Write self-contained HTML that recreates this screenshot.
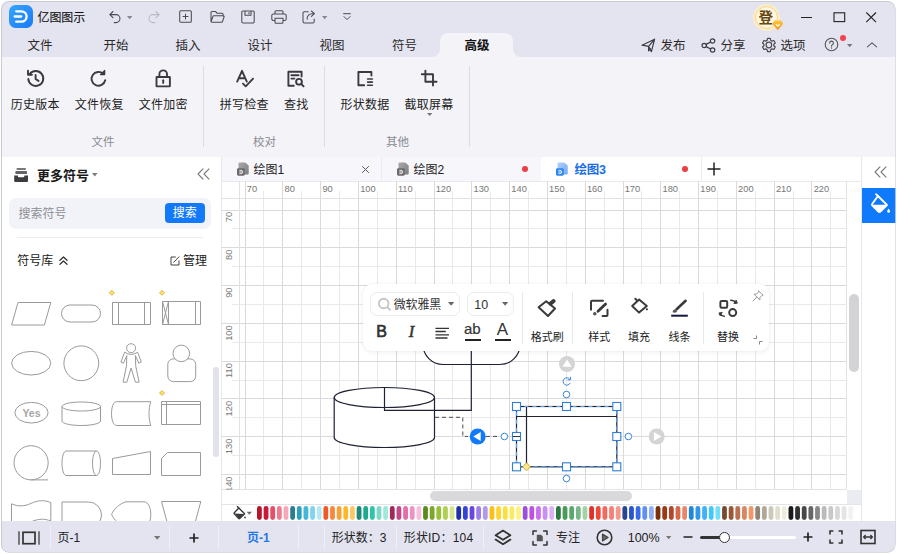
<!DOCTYPE html>
<html lang="zh-CN">
<head>
<meta charset="utf-8">
<title>亿图图示</title>
<style>
*{box-sizing:border-box}
html,body{margin:0;padding:0}
body{width:897px;height:554px;background:#fff;position:relative;overflow:hidden;font-family:"Liberation Sans","Noto Sans CJK SC",sans-serif;font-size:12px;color:#222}
#win{position:absolute;left:0;top:0;width:897px;height:554px;clip-path:inset(1px 1.5px 1.5px 1px round 8px);background:#e4e4f0}
.abs{position:absolute}
.t{position:absolute;white-space:nowrap;line-height:16px;height:16px;transform:translate(-50%,-50%);font-size:12px;color:#222}
.tl{position:absolute;white-space:nowrap;line-height:16px;height:16px;transform:translate(0,-50%);font-size:12px;color:#222}
svg{position:absolute;overflow:visible}
.ic{fill:none;stroke:#3c3c43;stroke-width:1.3;stroke-linecap:round;stroke-linejoin:round}
.sh{fill:#fff;stroke:#9a9a9a;stroke-width:1}
.sep{position:absolute;width:1px;background:#dcdce6}
</style>
</head>
<body>
<div id="win">
<!-- ===== title bar ===== -->
<div class="abs" style="left:9px;top:4.700px;width:24px;height:23.800px;border-radius:6.500px;background:linear-gradient(135deg,#35a4ff 0%,#1a7af5 100%)"></div>
<svg style="left:9px;top:5px" width="24" height="23" viewBox="0 0 24 23"><path d="M7.2 6.3h5.2a5.2 5.2 0 0 1 0 10.4H7.2" fill="none" stroke="#fff" stroke-width="2.3" stroke-linecap="round"/><path d="M5.6 11.5h6.6" fill="none" stroke="#fff" stroke-width="2.3" stroke-linecap="round"/></svg>
<div class="tl" style="left:37.5px;top:17.5px;font-size:12px;color:#111;letter-spacing:-0.1px;-webkit-text-stroke:0.1px #111">亿图图示</div>
<!-- quick access --><div class="qa"><style>.qa .ic{stroke-width:1.05;stroke:#4a4a52}</style>
<svg style="left:108px;top:10px" width="14" height="14" viewBox="0 0 14 14"><path class="ic" d="M5 1.5L1.8 4.6 5 7.7M2 4.6h6a4 4 0 0 1 0 8H6.2"/></svg>
<svg style="left:127px;top:15.5px" width="6" height="4" viewBox="0 0 6 4"><path d="M0 0h5.4L2.7 3.2z" fill="#888"/></svg>
<svg style="left:147px;top:10px" width="14" height="14" viewBox="0 0 14 14"><path class="ic" style="stroke:#b9b9c6" d="M9 1.5l3.2 3.1L9 7.7M12 4.6H6a4 4 0 0 0 0 8h1.8"/></svg>
<svg style="left:179px;top:9.8px" width="13" height="13" viewBox="0 0 13 13"><rect class="ic" x=".7" y=".7" width="11.6" height="11.6" rx="1.1"/><path class="ic" d="M6.5 4v5M4 6.5h5"/></svg>
<svg style="left:210px;top:10px" width="15" height="14" viewBox="0 0 15 14"><path class="ic" d="M1 11.8V2.6a1.2 1.2 0 0 1 1.2-1.2h3.3l1.6 1.9h4.8a1.2 1.2 0 0 1 1.2 1.2v1.6M1 11.8l1.9-5.3a1 1 0 0 1 1-.7h9.4a.8.8 0 0 1 .8 1.1l-1.6 4.6a1 1 0 0 1-1 .7H2a1 1 0 0 1-1-1z"/></svg>
<svg style="left:241px;top:10px" width="14" height="14" viewBox="0 0 14 14"><path class="ic" d="M2 1h10a1.2 1.2 0 0 1 1.2 1.2v9.600a1.200 1.200 0 0 1-1.200 1.200H2A1.200 1.200 0 0 1 .8 11.800V2.200A1.200 1.200 0 0 1 2 1zM4 1v4.300h6V1M8 2.600v1.200"/></svg>
<svg style="left:271px;top:10px" width="16" height="14" viewBox="0 0 16 14"><path class="ic" d="M4 4V1.800a1 1 0 0 1 1-1h6a1 1 0 0 1 1 1V4M4 10.500H2.400A1.600 1.600 0 0 1 .8 8.900V5.600A1.600 1.600 0 0 1 2.400 4h11.200a1.600 1.600 0 0 1 1.600 1.600v3.300a1.600 1.600 0 0 1-1.600 1.600H12M4 8.300h8v4a1 1 0 0 1-1 1H5a1 1 0 0 1-1-1z"/></svg>
<svg style="left:302px;top:10px" width="15" height="14" viewBox="0 0 15 14"><path class="ic" d="M6.200 1.700H2.400A1.400 1.400 0 0 0 1 3.100v8.400a1.400 1.400 0 0 0 1.400 1.400h8.400a1.400 1.400 0 0 0 1.400-1.400V9M9.400 1l3 2.700-3 2.700M12.200 3.700h-2.400a4.600 4.600 0 0 0-4.600 4.600v.8"/></svg>
<svg style="left:322px;top:15.500px" width="6" height="4" viewBox="0 0 6 4"><path d="M0 0h5.400L2.700 3.200z" fill="#888"/></svg>
<svg style="left:342.600px;top:13.400px" width="8" height="8" viewBox="0 0 8 8"><path class="ic" style="stroke-width:1" d="M.6.700h6.800M1 3.600l3 3 3-3"/></svg>
</div><!-- avatar -->
<div class="abs" style="left:755px;top:5.500px;width:23px;height:23px;border-radius:50%;background:#fef6e0;border:1.800px solid #f7d682;box-shadow:0 0 0 2px #fbeccb"></div>
<div class="t" style="left:765.700px;top:18.300px;font-size:14.500px;font-weight:bold;color:#664812">登</div>
<svg style="left:771.500px;top:19.600px" width="11.600" height="10.600" viewBox="0 0 11 10"><defs><linearGradient id="bdg" x1="0" y1="0" x2="0" y2="1"><stop offset="0" stop-color="#fcc63c"/><stop offset="1" stop-color="#f09818"/></linearGradient></defs><path d="M2.700.500h5.600a.8.800 0 0 1 .6.300l1.500 2.300a.8.800 0 0 1-.1 1L6.100 9a.8.800 0 0 1-1.200 0L.7 4.100a.8.800 0 0 1-.1-1L2.100.8a.8.800 0 0 1 .6-.3z" fill="url(#bdg)"/><path d="M3.600 3.800l1.900 2 1.900-2" fill="none" stroke="#fff" stroke-width="1"/></svg>
<!-- window controls -->
<svg style="left:800px;top:11px" width="13" height="13" viewBox="0 0 13 13"><path d="M1 6.500h11" stroke="#222" stroke-width="1.100" fill="none"/></svg>
<svg style="left:833px;top:11px" width="13" height="13" viewBox="0 0 13 13"><rect x="1" y="1.800" width="10.700" height="8.800" stroke="#222" stroke-width="1.100" fill="none"/></svg>
<svg style="left:865px;top:11px" width="13" height="13" viewBox="0 0 13 13"><path d="M1.300 1.500l9.700 9.700M11 1.500L1.300 11.200" stroke="#222" stroke-width="1.100" fill="none"/></svg>

<!-- ===== menu row ===== -->
<div class="abs" style="left:440px;top:33px;width:73px;height:24px;background:#f3f3f8;border-radius:8px 8px 0 0"></div>
<svg style="left:432px;top:49px" width="8" height="8" viewBox="0 0 8 8"><path d="M8 0v8H0a8 8 0 0 0 8-8z" fill="#f3f3f8"/></svg>
<svg style="left:513px;top:49px" width="8" height="8" viewBox="0 0 8 8"><path d="M0 0v8h8a8 8 0 0 1-8-8z" fill="#f3f3f8"/></svg>
<div class="t mn" style="left:39.9px;top:46px">文件</div>
<div class="t mn" style="left:115.9px;top:46px">开始</div>
<div class="t mn" style="left:187.9px;top:46px">插入</div>
<div class="t mn" style="left:259.9px;top:46px">设计</div>
<div class="t mn" style="left:331.9px;top:46px">视图</div>
<div class="t mn" style="left:404.400px;top:46px">符号</div>
<div class="t mn" style="left:476.9px;top:46px;font-weight:bold;color:#111">高级</div>
<style>.mn{font-size:12.500px;color:#2a2a2a}</style>
<!-- right menu -->
<svg style="left:641px;top:38px" width="15" height="15" viewBox="0 0 15 15"><path class="ic" style="stroke-width:1.200" d="M1 7.200L13.600 1.200 10.400 13.600 7.600 8.400zM7.600 8.400L13.600 1.200M7.600 8.400v4.400l2-2"/></svg>
<div class="tl mn" style="left:660.500px;top:46px">发布</div>
<svg style="left:701px;top:38px" width="15" height="15" viewBox="0 0 15 15"><g class="ic" style="stroke-width:1.200"><circle cx="3.200" cy="7.500" r="2.200"/><circle cx="11.600" cy="3" r="2.200"/><circle cx="11.600" cy="12" r="2.200"/><path d="M5.200 6.400l4.400-2.400M5.200 8.600l4.400 2.400"/></g></svg>
<div class="tl mn" style="left:720.500px;top:46px">分享</div>
<svg style="left:0;top:0" width="897" height="554" viewBox="0 0 897 554"><path d="M770.69 40.33L770.29 38.45L767.51 38.45L767.11 40.33L765.75 41.11L763.92 40.52L762.53 42.93L763.96 44.22L763.96 45.78L762.53 47.07L763.92 49.48L765.75 48.89L767.11 49.67L767.51 51.55L770.29 51.55L770.69 49.67L772.05 48.89L773.88 49.48L775.27 47.07L773.84 45.78L773.84 44.22L775.27 42.93L773.88 40.52L772.05 41.11z" fill="none" stroke="#4a4a50" stroke-width="1.200" stroke-linejoin="round"/><circle cx="768.9" cy="45.0" r="2.800" fill="none" stroke="#4a4a50" stroke-width="1.200"/></svg>
<div class="tl mn" style="left:780.500px;top:46px">选项</div>
<svg style="left:824.400px;top:37.400px" width="15" height="15" viewBox="0 0 15 15"><circle cx="7.500" cy="7.500" r="6.300" fill="none" stroke="#555" stroke-width="1.100"/><path d="M5.600 6a1.900 1.900 0 1 1 2.800 1.700c-.6.300-.9.700-.9 1.400" fill="none" stroke="#555" stroke-width="1.100" stroke-linecap="round"/><circle cx="7.500" cy="11" r=".7" fill="#555"/></svg>
<div class="abs" style="left:840px;top:35px;width:6px;height:6px;border-radius:50%;background:#f5414e"></div>
<svg style="left:847px;top:44px" width="6" height="4" viewBox="0 0 6 4"><path d="M0 0h5.400L2.700 3.200z" fill="#777"/></svg>
<svg style="left:866px;top:40.600px" width="12" height="8" viewBox="0 0 12 8"><path d="M1.400 5.800l4.600-4 4.600 4" fill="none" stroke="#5e5e66" stroke-width="1.100" stroke-linecap="round" stroke-linejoin="round"/></svg>

<!-- ===== ribbon ===== -->
<div class="abs" style="left:0;top:57px;width:897px;height:100px;background:#f3f3f8"></div>
<div class="sep" style="left:203px;top:66px;height:81px"></div>
<div class="sep" style="left:324px;top:66px;height:81px"></div>
<div class="sep" style="left:469px;top:66px;height:81px"></div>
<style>.rb{font-size:12px;letter-spacing:.25px;color:#222}.gl{font-size:11.500px;color:#8a8a92}</style>
<div class="t rb" style="left:35.200px;top:105px">历史版本</div>
<div class="t rb" style="left:99.200px;top:105px">文件恢复</div>
<div class="t rb" style="left:163.200px;top:105px">文件加密</div>
<div class="t gl" style="left:103px;top:141.500px">文件</div>
<div class="t rb" style="left:244.200px;top:105px">拼写检查</div>
<div class="t rb" style="left:296.200px;top:105px">查找</div>
<div class="t gl" style="left:264.500px;top:141.500px">校对</div>
<div class="t rb" style="left:365px;top:105px">形状数据</div>
<div class="t rb" style="left:429px;top:105px">截取屏幕</div>
<svg style="left:426.500px;top:112.500px" width="6" height="4" viewBox="0 0 6 4"><path d="M0 0h5.400L2.700 3z" fill="#777"/></svg>
<div class="t gl" style="left:397.500px;top:141.500px">其他</div>
<!-- ribbon icons -->
<svg style="left:0;top:0" width="897" height="554" viewBox="0 0 897 554"><g fill="none" stroke="#3a3a40" stroke-width="1.900" stroke-linecap="round" stroke-linejoin="round">
<path d="M29.600 74.200A7.500 7.500 0 1 1 28.300 78.900"/><path d="M28 70.800v3.900h3.900"/><path d="M35.600 75v4l2.900 1.900"/>
<path d="M105.200 80.300A6.900 6.900 0 1 1 103.300 73.900"/><path d="M104.700 70.400v4.200h-4.200z" fill="#3a3a40" stroke-width="1.200"/>
<rect x="156.500" y="77" width="13.400" height="9.400" rx=".4"/><path d="M159.400 77v-2.800a3.800 3.800 0 0 1 7.600 0V77"/><path d="M163.200 80.300v2.600"/>
<path d="M237.200 81.600L242 70.800 246.800 81.600M238.800 78.200h6.400"/><path d="M243 83.600l2.700 2.700 7.400-7.600"/>
<path d="M301.600 76.500V71.700H288.400V85.700h5.400"/><path d="M291.400 75.200h7.200M291.400 78.600h3"/><circle cx="299" cy="81.800" r="2.900"/><path d="M301.200 84l2.400 2.400"/>
<path d="M371.400 75.600V72H358.400v13.200h5.800"/><path d="M367.600 79h4.800M367.600 82.100h4.800M367.600 85.200h4.800" stroke-width="1.600"/>
<path d="M425.400 70.600v11.200h11.200"/><path d="M421.800 74.200h11.200v11.400"/>
</g></svg>
<!-- ===== lower body background ===== -->
<div class="abs" style="left:0;top:156.500px;width:897px;height:365px;background:#fff"></div>
<!-- ===== left panel ===== -->
<div class="abs" style="left:221px;top:156.500px;width:1px;height:365px;background:#e6e6ee"></div>
<svg style="left:0;top:0" width="897" height="554" viewBox="0 0 897 554"><rect x="16.600" y="168" width="9.200" height="1.900" rx=".5" fill="#7a7a7e"/><rect x="15.400" y="171.100" width="11.600" height="3" rx=".6" fill="#646468"/><path d="M14.200 175.400h3.700v.900a.9.900 0 0 0 .9.900h4.600a.9.900 0 0 0 .9-.9v-.900h3.700v5.600a1 1 0 0 1-1 1H15.200a1 1 0 0 1-1-1z" fill="#3c3c40"/></svg>
<div class="tl" style="left:37px;top:175.500px;font-size:13px;font-weight:bold;color:#1a1a1a">更多符号</div>
<svg style="left:92.200px;top:173.300px" width="7" height="4" viewBox="0 0 7 4"><path d="M0 0h5.600L2.800 3.400z" fill="#7a7a7a"/></svg>
<svg style="left:196.500px;top:167.700px" width="13" height="12" viewBox="0 0 13 12"><path d="M6 .8L1 6l5 5.200M12 .8L7 6l5 5.200" fill="none" stroke="#777" stroke-width="1.100" stroke-linecap="round" stroke-linejoin="round"/></svg>
<div class="abs" style="left:9px;top:197.500px;width:202px;height:31px;border-radius:7px;background:#f2f2f9"></div>
<div class="tl" style="left:18.500px;top:214.300px;font-size:12px;color:#8e8e93">搜索符号</div>
<div class="abs" style="left:165px;top:203px;width:39.500px;height:20px;border-radius:4px;background:#1279fb"></div>
<div class="t" style="left:184.700px;top:213px;font-size:12px;color:#fff">搜索</div>
<div class="abs" style="left:17px;top:237px;width:186px;height:1px;background:#ececf0"></div>
<div class="tl" style="left:17.300px;top:260.500px;font-size:12px;color:#1a1a1a">符号库</div>
<svg style="left:58.500px;top:256px" width="9" height="9" viewBox="0 0 9 9"><path d="M1 4.200L4.500 1 8 4.200M1 8.200L4.500 5 8 8.200" fill="none" stroke="#333" stroke-width="1.300" stroke-linecap="round" stroke-linejoin="round"/></svg>
<svg style="left:169.500px;top:255.500px" width="10" height="10" viewBox="0 0 10 10"><path d="M5.400 1H1v8h8V4.800M3.800 6.200L9 .8" fill="none" stroke="#444" stroke-width="1" stroke-linecap="round" stroke-linejoin="round"/></svg>
<div class="tl" style="left:183px;top:260.500px;font-size:12px;color:#1a1a1a">管理</div>
<!-- shapes -->
<svg style="left:0;top:285px" width="222" height="236" viewBox="0 285 222 236">
<defs><clipPath id="lpclip"><rect x="0" y="285" width="222" height="236"/></clipPath></defs>
<g clip-path="url(#lpclip)">
<!-- row1 -->
<path class="sh" d="M18 302.500H50.800L44.400 325H11.600z"/>
<rect class="sh" x="61.500" y="305" width="39" height="17" rx="8.500"/>
<path class="sh" d="M112.500 302.500h38v22h-38zM118.500 302.500v22M144.500 302.500v22"/>
<path class="sh" d="M162.500 301.500h38v23h-38zM168.500 301.500v23M195.500 301.500v23M162.500 301.500l6 23M168.500 301.500l-6 23"/>
<!-- row2 -->
<ellipse class="sh" cx="31.200" cy="363.200" rx="19.600" ry="11.800"/>
<circle class="sh" cx="81.300" cy="363.300" r="17.400"/>
<g class="sh"><path d="M124.600 352.200L120.900 362 123.400 363.200 126.800 355.600 126.500 365.700 123.100 382.200H126.800L131.100 368.100 135.400 382.200H139.100L135.700 365.700 135.400 355.600 138.800 363.200 141.300 362 137.600 352.200Q131.100 356.600 124.600 352.200z"/><circle cx="131.100" cy="348.200" r="4.500"/></g>
<rect class="sh" x="167.800" y="358.900" width="27.900" height="22.700" rx="5.500"/>
<circle class="sh" cx="181.300" cy="353.400" r="8.300"/>
<!-- row3 -->
<ellipse class="sh" cx="31.500" cy="412.700" rx="16.600" ry="10.300"/>
<text x="31.500" y="416.600" text-anchor="middle" font-family="Liberation Sans,sans-serif" font-size="10.500" font-weight="bold" fill="#a6a6a6">Yes</text>
<path class="sh" d="M62 406.500v14.500c0 2.500 8.600 4.500 19.250 4.500s19.250-2 19.250-4.500v-14.500c0-2.500-8.600-4.500-19.250-4.500S62 404 62 406.500zM62 406.500c0 2.500 8.600 4.500 19.250 4.500s19.250-2 19.250-4.500"/>
<path class="sh" d="M116.500 401.700h34.300c-2.400 7-2.400 16.800 0 23.800h-34.300c-3.200 0-5-5.800-5-11.900s1.800-11.900 5-11.900z"/>
<path class="sh" d="M161.500 401.500h39v23h-39zM166.500 401.500v23M161.500 404.500h39"/>
<!-- row4 -->
<circle class="sh" cx="31.100" cy="462.800" r="17.100"/>
<path class="sh" d="M31.100 479.900H48.200"/>
<path class="sh" d="M66 451h30.500c2.200 0 4 5.500 4 12.250s-1.800 12.250-4 12.250H66c-2.200 0-4-5.500-4-12.250S63.800 451 66 451zM96.500 451c-2.200 0-4 5.500-4 12.250s1.800 12.250 4 12.250"/>
<path class="sh" d="M112.500 458.500l38-7v23h-38z"/>
<path class="sh" d="M167.500 452.500h33v23h-39v-17z"/>
<!-- row5 -->
<path class="sh" d="M11.500 503.800c6 2.800 13 2.800 19.600-.400s13.600-3.600 19.700-.800v18.500c-6-2.800-13-2.400-19.700.800s-13.600 3.200-19.600.400z"/>
<path class="sh" d="M62 502h26.500a12 12 0 0 1 0 26H62z"/>
<path class="sh" d="M126 501.800h18c4 0 6.800 6 6.800 12.600s-2.800 12.600-6.800 12.600h-18c-6-1.600-12-6.800-14.400-12.600 2.400-5.800 8.400-11 14.400-12.600z"/>
<path class="sh" d="M161.500 501.500h39.300l-7 26h-25.300z"/>
<!-- yellow diamonds -->
<g fill="#ffe264" stroke="#c9a227" stroke-width=".7"><path d="M111.800 290.300l2.500 2.500-2.500 2.500-2.500-2.500zM162 290.300l2.500 2.500-2.500 2.500-2.500-2.500zM162 390.500l2.500 2.500-2.500 2.500-2.500-2.500z"/></g>
</g>
</svg>
<div class="abs" style="left:213px;top:367px;width:5.500px;height:89.500px;border-radius:3px;background:#e2e2ea"></div>
<!-- ===== document tabs ===== -->
<div class="abs" style="left:222px;top:156.500px;width:319px;height:24.500px;background:#f6f6fb"></div>
<div class="abs" style="left:381px;top:156.500px;width:1px;height:24.500px;background:#ebebf2"></div>
<div class="abs" style="left:222px;top:181px;width:639px;height:1px;background:#e9e9ee"></div>
<svg style="left:236.5px;top:162px" width="12" height="14" viewBox="0 0 12 14"><defs><linearGradient id="g236" x1="0" y1="0" x2="1" y2="1"><stop offset="0" stop-color="#a9a9ac"/><stop offset="1" stop-color="#7d7d80"/></linearGradient></defs><path d="M2.500.4h5.700L11.700 3.600V11.500a1 1 0 0 1-1 1H2.500a1 1 0 0 1-1-1V1.400a1 1 0 0 1 1-1z" fill="url(#g236)"/><rect x="0" y="6.200" width="7.800" height="7.500" rx="1.400" fill="#6b6b6e"/><path d="M2.800 8.300h1.300a1.650 1.650 0 0 1 0 3.300H2.800M2.600 9.950h2" fill="none" stroke="#fff" stroke-width=".85" stroke-linecap="round"/></svg>
<div class="tl" style="left:253.500px;top:169.700px;font-size:12px;color:#222">绘图1</div>
<svg style="left:361px;top:165px" width="9" height="9" viewBox="0 0 9 9"><path d="M1.200 1.200l6.600 6.600M7.800 1.200L1.200 7.800" stroke="#555" stroke-width="1" fill="none"/></svg>
<svg style="left:396.5px;top:162px" width="12" height="14" viewBox="0 0 12 14"><defs><linearGradient id="g396" x1="0" y1="0" x2="1" y2="1"><stop offset="0" stop-color="#a9a9ac"/><stop offset="1" stop-color="#7d7d80"/></linearGradient></defs><path d="M2.500.4h5.700L11.700 3.600V11.500a1 1 0 0 1-1 1H2.500a1 1 0 0 1-1-1V1.400a1 1 0 0 1 1-1z" fill="url(#g396)"/><rect x="0" y="6.200" width="7.800" height="7.500" rx="1.400" fill="#6b6b6e"/><path d="M2.800 8.300h1.300a1.650 1.650 0 0 1 0 3.300H2.800M2.600 9.950h2" fill="none" stroke="#fff" stroke-width=".85" stroke-linecap="round"/></svg>
<div class="tl" style="left:413.500px;top:169.700px;font-size:12px;color:#222">绘图2</div>
<div class="abs" style="left:522px;top:166px;width:6px;height:6px;border-radius:50%;background:#f03e3e"></div>
<svg style="left:556px;top:162px" width="12" height="14" viewBox="0 0 12 14"><defs><linearGradient id="g556" x1="0" y1="0" x2="1" y2="1"><stop offset="0" stop-color="#b4d2fb"/><stop offset="1" stop-color="#6ea8f6"/></linearGradient></defs><path d="M2.500.4h5.700L11.700 3.600V11.500a1 1 0 0 1-1 1H2.500a1 1 0 0 1-1-1V1.400a1 1 0 0 1 1-1z" fill="url(#g556)"/><rect x="0" y="6.200" width="7.800" height="7.500" rx="1.400" fill="#2b86f5"/><path d="M2.800 8.300h1.300a1.650 1.650 0 0 1 0 3.300H2.800M2.600 9.950h2" fill="none" stroke="#fff" stroke-width=".85" stroke-linecap="round"/></svg>
<div class="tl" style="left:574.500px;top:169.500px;font-size:12.500px;color:#1a6fe0;font-weight:bold;letter-spacing:-.3px">绘图3</div>
<div class="abs" style="left:681.800px;top:166px;width:6px;height:6px;border-radius:50%;background:#f03e3e"></div>
<div class="abs" style="left:701px;top:156.500px;width:1px;height:24.500px;background:#ebebf2"></div>
<svg style="left:706.500px;top:162px" width="14" height="14" viewBox="0 0 14 14"><path d="M7 .5v13M.5 7h13" stroke="#222" stroke-width="1.500" fill="none"/></svg>
<!-- ===== canvas ===== -->
<svg style="left:0;top:0" width="897" height="554" viewBox="0 0 897 554" shape-rendering="auto">
<g fill="none" stroke-width="1">
<path stroke="#e9e9ed" d="M263.5 191V489.5M301.5 191V489.5M339.5 191V489.5M377.5 191V489.5M415.5 191V489.5M452.5 191V489.5M490.5 191V489.5M528.5 191V489.5M566.5 191V489.5M604.5 191V489.5M641.5 191V489.5M679.5 191V489.5M717.5 191V489.5M755.5 191V489.5M793.5 191V489.5M830.5 191V489.5"/>
<path stroke="#e9e9ed" d="M232 228.5H846.5M232 266.5H846.5M232 304.5H846.5M232 342.5H846.5M232 380.5H846.5M232 417.5H846.5M232 455.5H846.5"/>
<path stroke="#dadade" d="M245.5 181.5V489.5M282.5 181.5V489.5M320.5 181.5V489.5M358.5 181.5V489.5M396.5 181.5V489.5M434.5 181.5V489.5M471.5 181.5V489.5M509.5 181.5V489.5M547.5 181.5V489.5M585.5 181.5V489.5M623.5 181.5V489.5M660.5 181.5V489.5M698.5 181.5V489.5M736.5 181.5V489.5M774.5 181.5V489.5M811.5 181.5V489.5"/>
<path stroke="#dadade" d="M222 210.5H846.5M222 247.5H846.5M222 285.5H846.5M222 323.5H846.5M222 361.5H846.5M222 398.5H846.5M222 436.5H846.5M222 474.5H846.5"/>
<path stroke="#e2e2e6" d="M239.5 181.5V489.5M222 198.5H846.5M846.5 181.5V489.5M222 489.5H846.5"/>
</g>
<defs><clipPath id="rclip"><rect x="222" y="181.5" width="624.5" height="308.0"/></clipPath></defs>
<g font-family="Liberation Sans,sans-serif" font-size="9.300" fill="#777" clip-path="url(#rclip)">
<text x="246.8" y="192">70</text>
<text x="284.6" y="192">80</text>
<text x="322.4" y="192">90</text>
<text x="360.2" y="192">100</text>
<text x="397.9" y="192">110</text>
<text x="435.7" y="192">120</text>
<text x="473.5" y="192">130</text>
<text x="511.3" y="192">140</text>
<text x="549.1" y="192">150</text>
<text x="586.9" y="192">160</text>
<text x="624.7" y="192">170</text>
<text x="662.5" y="192">180</text>
<text x="700.3" y="192">190</text>
<text x="738.1" y="192">200</text>
<text x="775.9" y="192">210</text>
<text x="813.7" y="192">220</text>
<text transform="translate(231.600 211.9) rotate(-90)" text-anchor="end" font-size="9.300">70</text>
<text transform="translate(231.600 249.7) rotate(-90)" text-anchor="end" font-size="9.300">80</text>
<text transform="translate(231.600 287.5) rotate(-90)" text-anchor="end" font-size="9.300">90</text>
<text transform="translate(231.600 325.3) rotate(-90)" text-anchor="end" font-size="9.300">100</text>
<text transform="translate(231.600 363.1) rotate(-90)" text-anchor="end" font-size="9.300">110</text>
<text transform="translate(231.600 400.9) rotate(-90)" text-anchor="end" font-size="9.300">120</text>
<text transform="translate(231.600 438.7) rotate(-90)" text-anchor="end" font-size="9.300">130</text>
<text transform="translate(231.600 476.5) rotate(-90)" text-anchor="end" font-size="9.300">140</text>
</g>
</svg>
<div class="abs" style="left:847px;top:490px;width:14.500px;height:14.500px;background:#ebebf2"></div>
<div class="abs" style="left:861px;top:156.500px;width:1px;height:365px;background:#e6e6ee"></div>
<div class="abs" style="left:849px;top:294px;width:9.500px;height:78px;border-radius:5px;background:#d3d3d6"></div>
<div class="abs" style="left:430px;top:491px;width:202px;height:10px;border-radius:5px;background:#d9d9db"></div>
<!-- ===== canvas shapes ===== -->
<svg style="left:0;top:0" width="897" height="554" viewBox="0 0 897 554">
<g fill="none" stroke="#1f2233" stroke-width="1.200">
<rect x="423" y="320" width="97" height="44.500" rx="20" fill="#fff"/>
<path d="M334.200 397.500v40c0 5.500 22.500 10 50.150 10s50.150-4.500 50.150-10v-40c0-5.500-22.500-10-50.150-10s-50.150 4.500-50.150 10z" fill="#fff"/>
<path d="M334.200 397.500c0 5.500 22.500 10 50.150 10s50.150-4.500 50.150-10"/>
<path d="M471.300 345V410.400H384.500V387.800"/>
</g>
<path d="M435 417.300H462.800V436.400H468" fill="none" stroke="#4a4a4a" stroke-width="1" stroke-dasharray="4 3"/>
<path d="M486 436.400H500" fill="none" stroke="#4a4a4a" stroke-width="1" stroke-dasharray="4 3"/>
<path d="M633 436.400H648" fill="none" stroke="#dcdcdc" stroke-width="1"/>
<!-- selected shape -->
<g fill="none" stroke="#1f2233" stroke-width="1.200">
<rect x="516.500" y="406.500" width="100.300" height="60.300" fill="#fff"/>
<path d="M526.500 406.500V466.800M516.500 416.500H616.800"/>
</g>
<rect x="516.500" y="406.500" width="100.300" height="60.300" fill="none" stroke="#5aa5f5" stroke-width="1.200" stroke-dasharray="4 4"/>
<!-- blue arrow circle -->
<circle cx="477.700" cy="436.500" r="8" fill="#1279fb"/>
<path d="M473.300 436.500l7.400-4.600v9.200z" fill="#fff"/>
<!-- gray arrow circles -->
<circle cx="567" cy="364" r="8" fill="#d4d4d4"/>
<path d="M567 359.400l4.600 7.400h-9.200z" fill="#fff"/>
<circle cx="656.700" cy="436.500" r="8" fill="#d4d4d4"/>
<path d="M661.300 436.500l-7.400-4.600v9.200z" fill="#fff"/>
<!-- connection point circles -->
<g fill="#fff" stroke="#3b87dd" stroke-width="1"><circle cx="566.500" cy="394.500" r="3.300"/><circle cx="628.400" cy="436.500" r="3.300"/><circle cx="566.500" cy="478.500" r="3.300"/><circle cx="504.400" cy="436.500" r="3.300"/></g>
<!-- rotate icon -->
<path d="M569.800 379.300a3.700 3.700 0 1 0 .4 3.600" fill="none" stroke="#3b87dd" stroke-width="1"/><path d="M570.600 376.800v3h-3" fill="none" stroke="#3b87dd" stroke-width="1"/>
<!-- handles -->
<g fill="#fff" stroke="#2f7fd8" stroke-width="1.100">
<rect x="512.500" y="402.500" width="8" height="8"/><rect x="562.500" y="402.500" width="8" height="8"/><rect x="612.800" y="402.500" width="8" height="8"/>
<rect x="512.500" y="432.500" width="8" height="8"/><rect x="612.800" y="432.500" width="8" height="8"/>
<rect x="512.500" y="462.800" width="8" height="8"/><rect x="562.500" y="462.800" width="8" height="8"/><rect x="612.800" y="462.800" width="8" height="8"/>
</g>
<path d="M513 436.500h7" stroke="#333" stroke-width="1" fill="none"/>
<path d="M526.500 462.800l4 4-4 4-4-4z" fill="#ffe88a" stroke="#b89b2e" stroke-width=".8"/>
</svg>

<!-- ===== floating toolbar ===== -->
<div class="abs" style="left:362.800px;top:284.200px;width:406.400px;height:66.800px;border-radius:9px;background:#fff;box-shadow:0 1px 5px rgba(0,0,0,.08),0 0 1px rgba(0,0,0,.06)"></div>
<div class="abs" style="left:370px;top:292px;width:89.500px;height:23.500px;border-radius:7px;border:1px solid #ebebeb;background:#fff"></div>
<div class="abs" style="left:466.500px;top:292px;width:47px;height:23.500px;border-radius:7px;border:1px solid #ebebeb;background:#fff"></div>
<svg style="left:376.500px;top:297px" width="14" height="14" viewBox="0 0 14 14"><circle cx="6.700" cy="6.500" r="4.800" fill="none" stroke="#c6c6c6" stroke-width="1.900"/><path d="M10.400 10.200l2.600 2.600" stroke="#c6c6c6" stroke-width="1.900" stroke-linecap="round"/></svg>
<div class="tl" style="left:393.800px;top:305px;font-size:12px;color:#333;letter-spacing:-.2px">微软雅黑</div>
<svg style="left:448px;top:301.500px" width="7" height="5" viewBox="0 0 7 5"><path d="M0 0h6.200L3.100 3.800z" fill="#666"/></svg>
<div class="tl" style="left:474.300px;top:304.800px;font-size:12.500px;color:#333">10</div>
<svg style="left:501.500px;top:301.500px" width="7" height="5" viewBox="0 0 7 5"><path d="M0 0h6.200L3.100 3.800z" fill="#666"/></svg>
<div class="abs" style="left:522px;top:291.500px;width:1px;height:52px;background:#e8e8ec"></div>
<div class="abs" style="left:572px;top:291.500px;width:1px;height:52px;background:#e8e8ec"></div>
<div class="abs" style="left:703px;top:291.500px;width:1px;height:52px;background:#e8e8ec"></div>
<!-- row 2 : B I align ab A -->
<div class="t" style="left:381.500px;top:331.500px;font-size:16px;color:#333;-webkit-text-stroke:.7px #333;line-height:18px;height:18px">B</div>
<div class="t" style="left:411.500px;top:331.500px;font-size:16.500px;font-style:italic;font-family:'Liberation Serif',serif;color:#333;-webkit-text-stroke:.5px #333;line-height:18px;height:18px">I</div>
<svg style="left:435px;top:327px" width="14" height="12" viewBox="0 0 14 12"><path d="M.5 1.300h13.500M.5 4.500h10.300M.5 7.800h13.500M.5 11h12" stroke="#333" stroke-width="1.300" fill="none"/></svg>
<div class="t" style="left:472.300px;top:329.300px;font-size:15px;color:#333;-webkit-text-stroke:.2px #333;line-height:16px">ab</div>
<div class="abs" style="left:464.500px;top:338.500px;width:16px;height:2px;background:#222"></div>
<div class="t" style="left:502.300px;top:329.800px;font-size:17px;color:#333;line-height:18px;height:18px">A</div>
<div class="abs" style="left:494.500px;top:338.500px;width:16px;height:2px;background:#222"></div>
<!-- big buttons -->
<style>.fb{font-size:11px;color:#222}</style>
<div class="t fb" style="left:547.300px;top:336.500px">格式刷</div>
<div class="t fb" style="left:599.200px;top:336.500px">样式</div>
<div class="t fb" style="left:639px;top:336.500px">填充</div>
<div class="t fb" style="left:679.500px;top:336.500px">线条</div>
<div class="t fb" style="left:728px;top:336.500px">替换</div>
<svg style="left:0;top:0" width="897" height="554" viewBox="0 0 897 554">
<g fill="none" stroke="#3a3a3a" stroke-width="2" stroke-linejoin="round" stroke-linecap="round">
<path d="M538.600 307.300L546.200 301.300 555 308.500 548 316z"/>
<path d="M550.600 303.600L553.600 301" stroke-width="4"/>
<path d="M591 309.800V301.800a1 1 0 0 1 1-1H603M607.500 309.800V314.900a1 1 0 0 1-1 1H602.600"/>
<path d="M605.600 304.100L598 311.300" stroke-width="2.800"/>
<path d="M632.200 306L639.100 299.500 646.800 306 639.100 312.600z"/>
<path d="M637.400 300.900L635.300 298.700"/>
<rect x="720.400" y="300.900" width="6.800" height="6.800" rx="1.300"/>
<circle cx="732.700" cy="312.600" r="3.500"/>
<path d="M730.800 300.300c2.400.100 4 1.100 4.900 2.600M724.200 316.300c-2-.200-3.300-1.200-3.900-2.600" stroke-width="1.600"/>
</g>
<circle cx="594.800" cy="313.700" r="1.800" fill="#555"/>
<circle cx="646.900" cy="309.300" r="1.100" fill="#3a3a3a"/>
<path d="M733.800 303.600l3.600-.4-1.200-3.200zM722.300 312.300l-3.400.6 1.300 3.100z" fill="#3a3a3a" stroke="#3a3a3a" stroke-width=".8" stroke-linejoin="round"/>
<path d="M685.600 300.800L676.600 309.200" stroke="#3a3a3a" stroke-width="2.600" stroke-linecap="round" fill="none"/>
<path d="M672.600 312.300c.2-1.900 1.300-3 3-3l1.500 1.500c-.2 1.700-1.900 2.300-4.500 1.500z" fill="#555"/>
<path d="M671.200 315.700h16.600" stroke="#14183c" stroke-width="2" fill="none"/>
</svg>
<svg style="left:751.700px;top:290px" width="12" height="12" viewBox="0 0 12 12"><path d="M6.800 1l4.200 4.200-1.200.4-1.800 1.800-.2 2.600L2 4.200l2.600-.2L6.400 2.200zM4.800 7.200L1 11" fill="none" stroke="#999" stroke-width="1" stroke-linejoin="round" stroke-linecap="round"/></svg>
<svg style="left:753px;top:334.500px" width="10" height="10" viewBox="0 0 10 10"><path d="M.5 3.500h3v-3M6.500 9.500v-3h3" fill="none" stroke="#888" stroke-width="1"/></svg>
<!-- ===== color bar ===== -->
<div class="abs" style="left:222px;top:504px;width:639px;height:17px;background:#fff;border-top:1px solid #e4e4e8"></div>
<svg style="left:0;top:0" width="897" height="554" viewBox="0 0 897 554"><path d="M238.800 508L244.600 513.800 239.800 518.600a.8.800 0 0 1-1.100 0L234.300 513.900a.8.800 0 0 1 0-1.100z" fill="#fff" stroke="#333" stroke-width="1.300" stroke-linejoin="round"/><path d="M234.600 513.400L243.800 514 239.800 518.200a.8.800 0 0 1-1.100 0z" fill="#3a3a3a"/><path d="M238.800 508L237.300 506.600" stroke="#333" stroke-width="1.300" stroke-linecap="round"/><circle cx="245" cy="517.600" r="1" fill="#555"/><path d="M246.700 511.800h5.200l-2.600 3z" fill="#6a6a6a"/></svg>
<svg style="left:0;top:0" width="897" height="554" viewBox="0 0 897 554">
<rect x="257.00" y="506" width="4.800" height="14" rx="2.400" fill="#b5162a"/>
<rect x="263.64" y="506" width="4.800" height="14" rx="2.400" fill="#cc1836"/>
<rect x="270.29" y="506" width="4.800" height="14" rx="2.400" fill="#e4506a"/>
<rect x="276.93" y="506" width="4.800" height="14" rx="2.400" fill="#f07a90"/>
<rect x="283.58" y="506" width="4.800" height="14" rx="2.400" fill="#f7a8b8"/>
<rect x="290.22" y="506" width="4.800" height="14" rx="2.400" fill="#2a7d8f"/>
<rect x="296.86" y="506" width="4.800" height="14" rx="2.400" fill="#2f9fbf"/>
<rect x="303.51" y="506" width="4.800" height="14" rx="2.400" fill="#45b8d8"/>
<rect x="310.15" y="506" width="4.800" height="14" rx="2.400" fill="#7fd4ea"/>
<rect x="316.80" y="506" width="4.800" height="14" rx="2.400" fill="#b5e8f5"/>
<rect x="323.44" y="506" width="4.800" height="14" rx="2.400" fill="#f05a28"/>
<rect x="330.08" y="506" width="4.800" height="14" rx="2.400" fill="#f58a3c"/>
<rect x="336.73" y="506" width="4.800" height="14" rx="2.400" fill="#f7a13a"/>
<rect x="343.37" y="506" width="4.800" height="14" rx="2.400" fill="#fbb82a"/>
<rect x="350.02" y="506" width="4.800" height="14" rx="2.400" fill="#fcc865"/>
<rect x="356.66" y="506" width="4.800" height="14" rx="2.400" fill="#1e8a7a"/>
<rect x="363.30" y="506" width="4.800" height="14" rx="2.400" fill="#1fa890"/>
<rect x="369.95" y="506" width="4.800" height="14" rx="2.400" fill="#2cc5ac"/>
<rect x="376.59" y="506" width="4.800" height="14" rx="2.400" fill="#7fd8c8"/>
<rect x="383.24" y="506" width="4.800" height="14" rx="2.400" fill="#9ee8dc"/>
<rect x="389.88" y="506" width="4.800" height="14" rx="2.400" fill="#a0285a"/>
<rect x="396.52" y="506" width="4.800" height="14" rx="2.400" fill="#c04a8a"/>
<rect x="403.17" y="506" width="4.800" height="14" rx="2.400" fill="#e070a8"/>
<rect x="409.81" y="506" width="4.800" height="14" rx="2.400" fill="#f090c8"/>
<rect x="416.46" y="506" width="4.800" height="14" rx="2.400" fill="#f5c0dc"/>
<rect x="423.10" y="506" width="4.800" height="14" rx="2.400" fill="#5a8a1e"/>
<rect x="429.74" y="506" width="4.800" height="14" rx="2.400" fill="#7aa828"/>
<rect x="436.39" y="506" width="4.800" height="14" rx="2.400" fill="#98c03a"/>
<rect x="443.03" y="506" width="4.800" height="14" rx="2.400" fill="#b0d050"/>
<rect x="449.68" y="506" width="4.800" height="14" rx="2.400" fill="#d5e590"/>
<rect x="456.32" y="506" width="4.800" height="14" rx="2.400" fill="#2030a8"/>
<rect x="462.96" y="506" width="4.800" height="14" rx="2.400" fill="#3545d0"/>
<rect x="469.61" y="506" width="4.800" height="14" rx="2.400" fill="#6a45e0"/>
<rect x="476.25" y="506" width="4.800" height="14" rx="2.400" fill="#9a80e8"/>
<rect x="482.90" y="506" width="4.800" height="14" rx="2.400" fill="#b098f0"/>
<rect x="489.54" y="506" width="4.800" height="14" rx="2.400" fill="#fbc015"/>
<rect x="496.18" y="506" width="4.800" height="14" rx="2.400" fill="#fcd535"/>
<rect x="502.83" y="506" width="4.800" height="14" rx="2.400" fill="#f8e040"/>
<rect x="509.47" y="506" width="4.800" height="14" rx="2.400" fill="#faec60"/>
<rect x="516.12" y="506" width="4.800" height="14" rx="2.400" fill="#fbf580"/>
<rect x="522.76" y="506" width="4.800" height="14" rx="2.400" fill="#9a50d8"/>
<rect x="529.40" y="506" width="4.800" height="14" rx="2.400" fill="#c050e0"/>
<rect x="536.05" y="506" width="4.800" height="14" rx="2.400" fill="#cc70f0"/>
<rect x="542.69" y="506" width="4.800" height="14" rx="2.400" fill="#c890f0"/>
<rect x="549.34" y="506" width="4.800" height="14" rx="2.400" fill="#dcb0f5"/>
<rect x="555.98" y="506" width="4.800" height="14" rx="2.400" fill="#2a7a40"/>
<rect x="562.62" y="506" width="4.800" height="14" rx="2.400" fill="#4a9a58"/>
<rect x="569.27" y="506" width="4.800" height="14" rx="2.400" fill="#5aa870"/>
<rect x="575.91" y="506" width="4.800" height="14" rx="2.400" fill="#78b888"/>
<rect x="582.56" y="506" width="4.800" height="14" rx="2.400" fill="#a0d4a8"/>
<rect x="589.20" y="506" width="4.800" height="14" rx="2.400" fill="#e03028"/>
<rect x="595.84" y="506" width="4.800" height="14" rx="2.400" fill="#f04838"/>
<rect x="602.49" y="506" width="4.800" height="14" rx="2.400" fill="#f06a60"/>
<rect x="609.13" y="506" width="4.800" height="14" rx="2.400" fill="#f58078"/>
<rect x="615.78" y="506" width="4.800" height="14" rx="2.400" fill="#f5988a"/>
<rect x="622.42" y="506" width="4.800" height="14" rx="2.400" fill="#2a4590"/>
<rect x="629.06" y="506" width="4.800" height="14" rx="2.400" fill="#2a55c8"/>
<rect x="635.71" y="506" width="4.800" height="14" rx="2.400" fill="#3a6aea"/>
<rect x="642.35" y="506" width="4.800" height="14" rx="2.400" fill="#6090f0"/>
<rect x="649.00" y="506" width="4.800" height="14" rx="2.400" fill="#90b0f5"/>
<rect x="655.64" y="506" width="4.800" height="14" rx="2.400" fill="#7a3008"/>
<rect x="662.28" y="506" width="4.800" height="14" rx="2.400" fill="#9a3a18"/>
<rect x="668.93" y="506" width="4.800" height="14" rx="2.400" fill="#b04830"/>
<rect x="675.57" y="506" width="4.800" height="14" rx="2.400" fill="#d8684a"/>
<rect x="682.22" y="506" width="4.800" height="14" rx="2.400" fill="#e8886a"/>
<rect x="688.86" y="506" width="4.800" height="14" rx="2.400" fill="#2088d8"/>
<rect x="695.50" y="506" width="4.800" height="14" rx="2.400" fill="#3098e8"/>
<rect x="702.15" y="506" width="4.800" height="14" rx="2.400" fill="#40b0f8"/>
<rect x="708.79" y="506" width="4.800" height="14" rx="2.400" fill="#40c8f8"/>
<rect x="715.44" y="506" width="4.800" height="14" rx="2.400" fill="#70e0fa"/>
<rect x="722.08" y="506" width="4.800" height="14" rx="2.400" fill="#7a4a30"/>
<rect x="728.72" y="506" width="4.800" height="14" rx="2.400" fill="#985838"/>
<rect x="735.37" y="506" width="4.800" height="14" rx="2.400" fill="#b87050"/>
<rect x="742.01" y="506" width="4.800" height="14" rx="2.400" fill="#d88860"/>
<rect x="748.66" y="506" width="4.800" height="14" rx="2.400" fill="#f09868"/>
<rect x="755.30" y="506" width="4.800" height="14" rx="2.400" fill="#908478"/>
<rect x="761.94" y="506" width="4.800" height="14" rx="2.400" fill="#b0a898"/>
<rect x="768.59" y="506" width="4.800" height="14" rx="2.400" fill="#ccc8b8"/>
<rect x="775.23" y="506" width="4.800" height="14" rx="2.400" fill="#e0dcd0"/>
<rect x="781.88" y="506" width="4.800" height="14" rx="2.400" fill="#f0ecdc"/>
<rect x="788.52" y="506" width="4.800" height="14" rx="2.400" fill="#1a1a1a"/>
<rect x="795.16" y="506" width="4.800" height="14" rx="2.400" fill="#303030"/>
<rect x="801.81" y="506" width="4.800" height="14" rx="2.400" fill="#484848"/>
<rect x="808.45" y="506" width="4.800" height="14" rx="2.400" fill="#666666"/>
<rect x="815.10" y="506" width="4.800" height="14" rx="2.400" fill="#888888"/>
<rect x="821.74" y="506" width="4.800" height="14" rx="2.400" fill="#bbbbbb"/>
<rect x="828.38" y="506" width="4.800" height="14" rx="2.400" fill="#c8c8c8"/>
<rect x="835.03" y="506" width="4.800" height="14" rx="2.400" fill="#d8d8d8"/>
<rect x="841.67" y="506" width="4.800" height="14" rx="2.400" fill="#e4e4e4"/>
<rect x="848.32" y="506" width="4.800" height="14" rx="2.400" fill="#f2f2f2"/>
<rect x="854.96" y="506" width="4.800" height="14" rx="2.400" fill="#ffffff"/>
</svg>
<!-- ===== right panel ===== -->
<svg style="left:873.500px;top:166px" width="13" height="12" viewBox="0 0 13 12"><path d="M6 .8L1 6l5 5.200M12 .8L7 6l5 5.200" fill="none" stroke="#777" stroke-width="1.100" stroke-linecap="round" stroke-linejoin="round"/></svg>
<div class="abs" style="left:862px;top:188.200px;width:35px;height:34.600px;background:#0f7afc"></div>
<svg style="left:870px;top:194px" width="22" height="22" viewBox="0 0 22 22"><path d="M8 2l9 9-6.600 6.600a1.400 1.400 0 0 1-2 0L2.400 11.600a1.400 1.400 0 0 1 0-2z" fill="none" stroke="#fff" stroke-width="1.800" stroke-linejoin="round"/><path d="M2.600 10.800h14l-6.200 6.600a1.400 1.400 0 0 1-2 0z" fill="#fff"/><path d="M8 2L6 .2" stroke="#fff" stroke-width="1.800" stroke-linecap="round"/><path d="M18.600 14.600c.9 1.300 1.400 2.100 1.400 2.800a1.400 1.400 0 0 1-2.800 0c0-.7.500-1.500 1.400-2.800z" fill="#fff"/></svg>
<!-- ===== status bar ===== -->
<div class="abs" style="left:0;top:521px;width:897px;height:33px;background:#e4e4f0"></div>
<style>.sb{font-size:12px;color:#222}.ss{position:absolute;top:525px;width:1px;height:24px;background:#eeeff8}</style>
<svg style="left:18px;top:530.500px" width="22" height="14" viewBox="0 0 22 14"><path d="M1 .3v13.400M21 .3v13.400" stroke="#555" stroke-width="1.500" fill="none"/><rect x="5" y="1.300" width="12" height="11.400" fill="none" stroke="#333" stroke-width="1.700"/></svg>
<div class="ss" style="left:50px"></div>
<div class="tl sb" style="left:57.500px;top:537.500px">页-1</div>
<svg style="left:153.500px;top:535.500px" width="7" height="5" viewBox="0 0 7 5"><path d="M0 0h6.400L3.200 3.800z" fill="#777"/></svg>
<div class="ss" style="left:169px"></div>
<svg style="left:189px;top:532.500px" width="10" height="10" viewBox="0 0 10 10"><path d="M5 .5v9M.5 5h9" stroke="#222" stroke-width="1.700" fill="none"/></svg>
<div class="ss" style="left:218px"></div>
<div class="tl sb" style="left:247px;top:537.500px;color:#2478e2;font-weight:bold">页-1</div>
<div class="ss" style="left:297.500px"></div>
<div class="ss" style="left:323.500px"></div>
<div class="tl sb" style="left:331.800px;top:537.500px">形状数：3</div>
<div class="ss" style="left:395.500px"></div>
<div class="tl sb" style="left:403.700px;top:537.500px;letter-spacing:.2px">形状ID：104</div>
<div class="ss" style="left:483px"></div>
<svg style="left:494px;top:528.500px" width="18" height="18" viewBox="0 0 18 18"><path d="M9 1.600L16.400 6.200 9 10.800 1.600 6.200zM1.600 10.600L9 15.200l7.400-4.600" fill="none" stroke="#333" stroke-width="1.800" stroke-linejoin="round" stroke-linecap="round"/></svg>
<svg style="left:532px;top:529.500px" width="16" height="16" viewBox="0 0 16 16"><path d="M1 4.400V1h3.400M11.600 1H15v3.400M15 11.600V15h-3.400M4.400 15H1v-3.400" fill="none" stroke="#333" stroke-width="1.500" stroke-linecap="round" stroke-linejoin="round"/><path d="M4.800 4.800h4.200l1.800 1.800v4.600h-6z" fill="#555"/></svg>
<div class="tl sb" style="left:556px;top:537.500px">专注</div>
<svg style="left:596px;top:529px" width="17" height="17" viewBox="0 0 17 17"><circle cx="8.500" cy="8.500" r="7.300" fill="none" stroke="#333" stroke-width="1.600"/><path d="M6.500 5l5.600 3.500-5.600 3.500z" fill="#666" stroke="#444" stroke-width="1.200" stroke-linejoin="round"/></svg>
<div class="tl sb" style="left:627.700px;top:537.500px;font-size:12.500px">100%</div>
<svg style="left:665.500px;top:536px" width="6" height="4" viewBox="0 0 6 4"><path d="M0 0h5.400L2.700 3.200z" fill="#777"/></svg>
<svg style="left:683px;top:532.300px" width="10" height="10" viewBox="0 0 10 10"><path d="M.5 5h9" stroke="#222" stroke-width="1.500" fill="none"/></svg>
<div class="abs" style="left:700px;top:536.200px;width:96px;height:2.600px;border-radius:1.500px;background:#fff"></div>
<div class="abs" style="left:700px;top:536px;width:22px;height:3px;border-radius:1.500px;background:#333"></div>
<div class="abs" style="left:718.500px;top:531.800px;width:11.400px;height:11.400px;border-radius:50%;background:#fff;border:1.900px solid #333"></div>
<svg style="left:803px;top:532.300px" width="10" height="10" viewBox="0 0 10 10"><path d="M5 .5v9M.5 5h9" stroke="#222" stroke-width="1.700" fill="none"/></svg>
<svg style="left:829px;top:529.800px" width="14" height="14" viewBox="0 0 14 14"><path d="M1 4.400V1h3.400M9.600 1H13v3.400M13 9.600V13H9.600M4.400 13H1V9.600" fill="none" stroke="#333" stroke-width="1.600" stroke-linejoin="miter"/></svg>
<svg style="left:860px;top:529.200px" width="16" height="16" viewBox="0 0 16 15"><rect x="1" y="1" width="14" height="13" fill="none" stroke="#333" stroke-width="1.600"/><path d="M3.600 7.500h8.800M5.600 5.400L3.600 7.500l2 2.100M10.400 5.400l2 2.100-2 2.100" fill="none" stroke="#333" stroke-width="1.300"/></svg>
<div class="abs" style="left:1px;top:1px;width:894.500px;height:551.500px;border:1px solid #c9c9d3;border-radius:8px"></div>
</div>
</body>
</html>
